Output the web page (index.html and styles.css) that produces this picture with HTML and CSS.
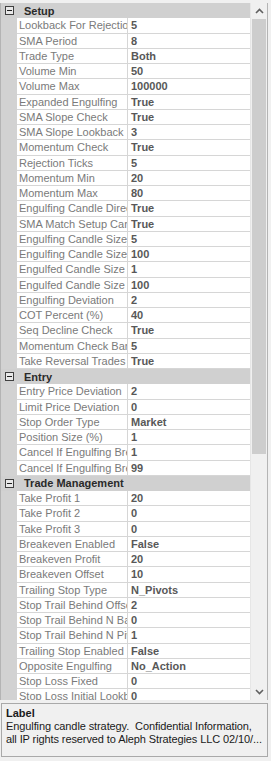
FILE: index.html
```html
<!DOCTYPE html>
<html>
<head>
<meta charset="utf-8">
<link rel="stylesheet" href="styles.css">
</head>
<body>
<div class="pg">
  <div class="grid">
    <div class="rows">
      <div class="cat"><span class="box"></span><span class="cat-name">Setup</span></div>
      <div class="row"><span class="name">Lookback For Rejection Ticks</span><span class="val">5</span></div>
      <div class="row"><span class="name">SMA Period</span><span class="val">8</span></div>
      <div class="row"><span class="name">Trade Type</span><span class="val">Both</span></div>
      <div class="row"><span class="name">Volume Min</span><span class="val">50</span></div>
      <div class="row"><span class="name">Volume Max</span><span class="val">100000</span></div>
      <div class="row"><span class="name">Expanded Engulfing</span><span class="val">True</span></div>
      <div class="row"><span class="name">SMA Slope Check</span><span class="val">True</span></div>
      <div class="row"><span class="name">SMA Slope Lookback</span><span class="val">3</span></div>
      <div class="row"><span class="name">Momentum Check</span><span class="val">True</span></div>
      <div class="row"><span class="name">Rejection Ticks</span><span class="val">5</span></div>
      <div class="row"><span class="name">Momentum Min</span><span class="val">20</span></div>
      <div class="row"><span class="name">Momentum Max</span><span class="val">80</span></div>
      <div class="row"><span class="name">Engulfing Candle Direction</span><span class="val">True</span></div>
      <div class="row"><span class="name">SMA Match Setup Candle</span><span class="val">True</span></div>
      <div class="row"><span class="name">Engulfing Candle Size Min</span><span class="val">5</span></div>
      <div class="row"><span class="name">Engulfing Candle Size Max</span><span class="val">100</span></div>
      <div class="row"><span class="name">Engulfed Candle Size Min</span><span class="val">1</span></div>
      <div class="row"><span class="name">Engulfed Candle Size Max</span><span class="val">100</span></div>
      <div class="row"><span class="name">Engulfing Deviation</span><span class="val">2</span></div>
      <div class="row"><span class="name">COT Percent (%)</span><span class="val">40</span></div>
      <div class="row"><span class="name">Seq Decline Check</span><span class="val">True</span></div>
      <div class="row"><span class="name">Momentum Check Bars</span><span class="val">5</span></div>
      <div class="row"><span class="name">Take Reversal Trades</span><span class="val">True</span></div>
      <div class="cat"><span class="box"></span><span class="cat-name">Entry</span></div>
      <div class="row"><span class="name">Entry Price Deviation</span><span class="val">2</span></div>
      <div class="row"><span class="name">Limit Price Deviation</span><span class="val">0</span></div>
      <div class="row"><span class="name">Stop Order Type</span><span class="val">Market</span></div>
      <div class="row"><span class="name">Position Size (%)</span><span class="val">1</span></div>
      <div class="row"><span class="name">Cancel If Engulfing Breaks</span><span class="val">1</span></div>
      <div class="row"><span class="name">Cancel If Engulfing Breaks Bars</span><span class="val">99</span></div>
      <div class="cat"><span class="box"></span><span class="cat-name">Trade Management</span></div>
      <div class="row"><span class="name">Take Profit 1</span><span class="val">20</span></div>
      <div class="row"><span class="name">Take Profit 2</span><span class="val">0</span></div>
      <div class="row"><span class="name">Take Profit 3</span><span class="val">0</span></div>
      <div class="row"><span class="name">Breakeven Enabled</span><span class="val">False</span></div>
      <div class="row"><span class="name">Breakeven Profit</span><span class="val">20</span></div>
      <div class="row"><span class="name">Breakeven Offset</span><span class="val">10</span></div>
      <div class="row"><span class="name">Trailing Stop Type</span><span class="val">N_Pivots</span></div>
      <div class="row"><span class="name">Stop Trail Behind Offset</span><span class="val">2</span></div>
      <div class="row"><span class="name">Stop Trail Behind N Bars</span><span class="val">0</span></div>
      <div class="row"><span class="name">Stop Trail Behind N Pivots</span><span class="val">1</span></div>
      <div class="row"><span class="name">Trailing Stop Enabled</span><span class="val">False</span></div>
      <div class="row"><span class="name">Opposite Engulfing</span><span class="val">No_Action</span></div>
      <div class="row"><span class="name">Stop Loss Fixed</span><span class="val">0</span></div>
      <div class="row"><span class="name">Stop Loss Initial Lookback</span><span class="val">0</span></div>
      <div class="row"><span class="name">Stop Loss Initial Offset</span><span class="val">0</span></div>
    </div>
    <div class="vscroll">
      <div class="arrow">
        <svg width="9" height="6" viewBox="0 0 9 6"><path d="M1 5 L4.5 1.5 L8 5" fill="none" stroke="#606060" stroke-width="1.6"/></svg>
      </div>
      <div class="track">
        <div class="thumb"></div>
      </div>
      <div class="arrow">
        <svg width="9" height="6" viewBox="0 0 9 6"><path d="M1 1 L4.5 4.5 L8 1" fill="none" stroke="#606060" stroke-width="1.6"/></svg>
      </div>
    </div>
  </div>
  <div class="help">
    <div class="help-title">Label</div>
    <div class="help-line">Engulfing candle strategy.&nbsp; Confidential Information,</div>
    <div class="help-line">all IP rights reserved to Aleph Strategies LLC 02/10/...</div>
  </div>
</div>
</body>
</html>
```

FILE: styles.css
```css
html, body {
  margin: 0;
  padding: 0;
  background: #f0f0f0;
}
.pg {
  width: 271px;
  height: 761px;
  display: flex;
  flex-direction: column;
  font-family: "Liberation Sans", Arial, sans-serif;
  font-size: 11px;
  box-sizing: border-box;
  padding: 3px 3px 4px 0;
  gap: 3px;
}
.grid {
  height: 697px;
  display: flex;
  border-left: 1px solid #b4b4b4;
  border-right: 1px solid #b4b4b4;
  background: #d2d2d2;
  overflow: hidden;
}
.rows {
  flex: 1;
  display: flex;
  flex-direction: column;
  overflow: hidden;
}
.cat {
  height: 15.25px;
  flex: none;
  display: flex;
  align-items: center;
  background: #d0d0d0;
  box-sizing: border-box;
}
.box {
  width: 7px;
  height: 7px;
  border: 1px solid #404040;
  margin-left: 4px;
  position: relative;
  background: #e8e8e8;
}
.box::after {
  content: "";
  position: absolute;
  left: 1px;
  top: 3px;
  width: 5px;
  height: 1px;
  background: #202020;
}
.cat-name {
  margin-left: 10px;
  font-weight: bold;
  color: #2a2a2a;
}
.row {
  height: 15.25px;
  flex: none;
  display: flex;
  box-sizing: border-box;
  padding-left: 16px;
}
.name, .val {
  background: #fff;
  border-bottom: 1px solid #d6d6d6;
  box-sizing: border-box;
  white-space: nowrap;
  overflow: hidden;
  line-height: 14px;
}
.name {
  width: 111px;
  flex: none;
  padding-left: 2px;
  color: #7a7a7a;
  border-right: 1px solid #d6d6d6;
}
.val {
  flex: 1;
  padding-left: 3px;
  font-weight: bold;
  color: #585858;
}
.vscroll {
  width: 16px;
  flex: none;
  display: flex;
  flex-direction: column;
  background: #f0f0f0;
  border-left: 1px solid #e6e6e6;
}
.arrow {
  height: 16px;
  display: flex;
  align-items: center;
  justify-content: center;
  flex: none;
}
.track {
  flex: 1;
  display: flex;
  flex-direction: column;
}
.thumb {
  margin: 0 1px;
  height: 435px;
  background: #cdcdcd;
}
.help {
  flex: 1;
  margin-left: 1px;
  border: 1px solid #a9a9a9;
  background: #f0f0f0;
  padding: 2px 4px 3px;
  color: #1a1a1a;
}
.help-title {
  font-weight: bold;
  line-height: 14px;
}
.help-line {
  line-height: 13px;
  white-space: nowrap;
  overflow: hidden;
  letter-spacing: -0.1px;
}
```
